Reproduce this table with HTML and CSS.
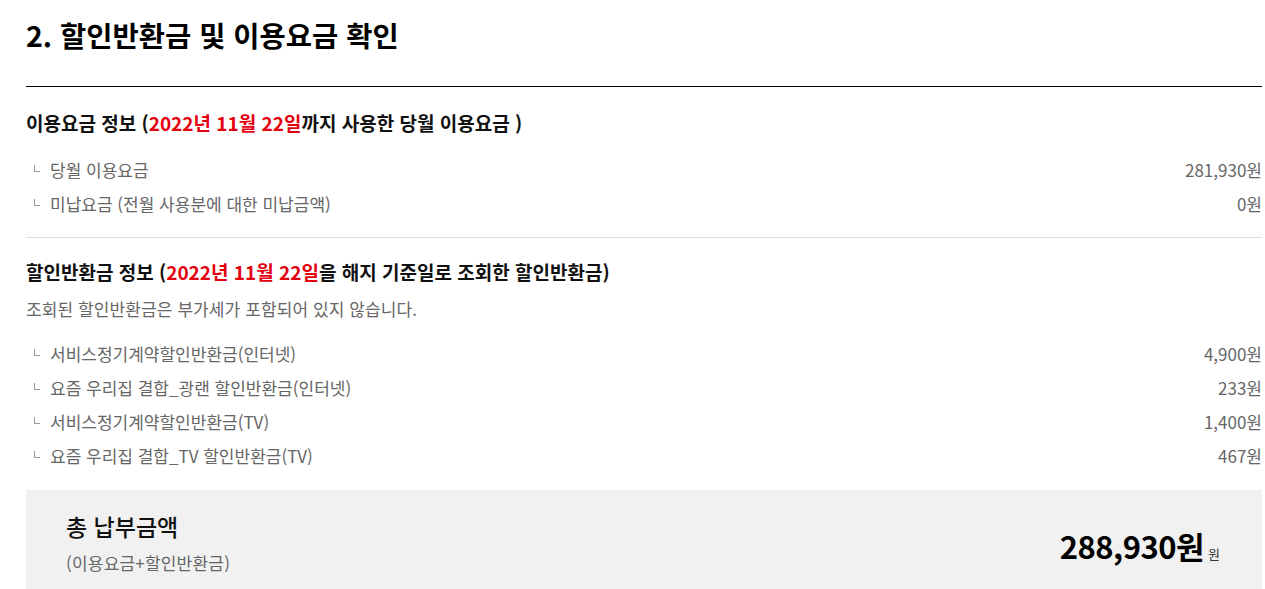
FILE: index.html
```html
<!DOCTYPE html>
<html lang="ko">
<head>
<meta charset="utf-8">
<link rel="stylesheet" href="styles.css">
</head>
<body>
<div class="page">
  <h2 class="title">2. 할인반환금 및 이용요금 확인</h2>
  <section class="block">
    <h3 class="block-head">이용요금 정보 (<span class="red">2022년 11월 22일</span>까지 사용한 당월 이용요금 )</h3>
    <ul class="items">
      <li class="item"><span class="label">당월 이용요금</span><span class="val">281,930원</span></li>
      <li class="item"><span class="label">미납요금 (전월 사용분에 대한 미납금액)</span><span class="val">0원</span></li>
    </ul>
  </section>
  <section class="block second">
    <h3 class="block-head">할인반환금 정보 (<span class="red">2022년 11월 22일</span>을 해지 기준일로 조회한 할인반환금)</h3>
    <p class="note">조회된 할인반환금은 부가세가 포함되어 있지 않습니다.</p>
    <ul class="items">
      <li class="item"><span class="label">서비스정기계약할인반환금(인터넷)</span><span class="val">4,900원</span></li>
      <li class="item"><span class="label">요즘 우리집 결합_광랜 할인반환금(인터넷)</span><span class="val">233원</span></li>
      <li class="item"><span class="label">서비스정기계약할인반환금(TV)</span><span class="val">1,400원</span></li>
      <li class="item"><span class="label">요즘 우리집 결합_TV 할인반환금(TV)</span><span class="val">467원</span></li>
    </ul>
  </section>
  <div class="total">
    <div class="total-left">
      <div class="total-title">총 납부금액</div>
      <div class="total-sub">(이용요금+할인반환금)</div>
    </div>
    <div class="total-amount"><strong class="amount">288,930원</strong><span class="unit">원</span></div>
  </div>
</div>
</body>
</html>
```

FILE: styles.css
```css
* { box-sizing: border-box; }
html, body { margin: 0; padding: 0; background: #fff; }
body {
  font-family: "Noto Sans CJK KR", "Noto Sans", sans-serif;
  color: #111;
}
.page {
  padding: 15px 3px 0 26px;
}
.title {
  margin: 0;
  font-size: 28.5px;
  line-height: 40px;
  font-weight: 700;
  color: #000;
  padding-bottom: 31px;
  border-bottom: 1px solid #000;
}
.block {
  padding-top: 23px;
  padding-bottom: 16px;
  border-bottom: 1px solid #ddd;
}
.block.second {
  border-bottom: none;
  padding-top: 21px;
}
.block-head {
  margin: 0;
  font-size: 19px;
  line-height: 26px;
  font-weight: 700;
  color: #111;
}
.red { color: #e4000f; }
.note {
  margin: 12px 0 0;
  font-size: 17px;
  line-height: 24px;
  color: #666;
  letter-spacing: 0.1px;
}
.items {
  list-style: none;
  margin: 17px 0 0;
  padding: 0;
}
.second .items { margin-top: 16px; }
.item {
  display: flex;
  justify-content: space-between;
  font-size: 17px;
  line-height: 34px;
  color: #666;
}
.label {
  position: relative;
  padding-left: 24px;
}
.label::before {
  content: "";
  position: absolute;
  left: 8px;
  top: 12px;
  width: 5px;
  height: 6px;
  border-left: 1px solid #999;
  border-bottom: 1px solid #999;
}
.total {
  display: flex;
  justify-content: space-between;
  align-items: center;
  background: #f1f1f1;
  margin-top: 1px;
  padding: 20px 42px 16px 40px;
}
.total-title {
  font-size: 23px;
  line-height: 32px;
  font-weight: 500;
  color: #111;
}
.total-sub {
  margin-top: 9px;
  font-size: 17px;
  line-height: 24px;
  color: #666;
  letter-spacing: 0.2px;
}
.total-amount {
  display: flex;
  align-items: baseline;
  gap: 4px;
  padding-top: 6px;
}
.amount {
  font-size: 31px;
  font-weight: 700;
  color: #000;
  letter-spacing: -0.5px;
}
.unit {
  font-size: 13px;
  color: #333;
}
```
